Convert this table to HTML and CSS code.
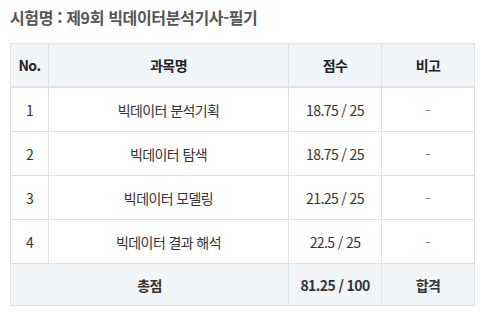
FILE: index.html
```html
<!DOCTYPE html>
<html lang="ko">
    <head>
        <meta charset="UTF-8">
        <title>시험 결과</title>
        <link rel="stylesheet" href="styles.css">
    </head>
    <body>
        <div class="result">
            <h2 class="exam-title">시험명 : 제9회 빅데이터분석기사-필기</h2>
            <table class="score-table">
                <colgroup>
                    <col class="col-no">
                    <col class="col-name">
                    <col class="col-score">
                    <col class="col-note">
                </colgroup>
                <thead>
                    <tr>
                        <th>No.</th>
                        <th>과목명</th>
                        <th>점수</th>
                        <th>비고</th>
                    </tr>
                </thead>
                <tbody>
                    <tr>
                        <td>1</td>
                        <td>빅데이터 분석기획</td>
                        <td>18.75 / 25</td>
                        <td class="note">-</td>
                    </tr>
                    <tr>
                        <td>2</td>
                        <td>빅데이터 탐색</td>
                        <td>18.75 / 25</td>
                        <td class="note">-</td>
                    </tr>
                    <tr>
                        <td>3</td>
                        <td>빅데이터 모델링</td>
                        <td>21.25 / 25</td>
                        <td class="note">-</td>
                    </tr>
                    <tr>
                        <td>4</td>
                        <td>빅데이터 결과 해석</td>
                        <td>22.5 / 25</td>
                        <td class="note">-</td>
                    </tr>
                </tbody>
                <tfoot>
                    <tr>
                        <th colspan="2">총점</th>
                        <th>81.25 / 100</th>
                        <th>합격</th>
                    </tr>
                </tfoot>
            </table>
        </div>
    </body>
</html>
```

FILE: styles.css
```css
body {
    margin: 0;
    padding: 0 10px;
    background: #fff;
    font-family: "Noto Sans CJK KR", "Noto Sans", sans-serif;
    color: #333;
}

.exam-title {
    margin: 0;
    padding-top: 6px;
    height: 37px;
    font-size: 16px;
    font-weight: 700;
    line-height: 22px;
    color: #555;
    letter-spacing: -0.35px;
}

.score-table {
    width: 464px;
    border-collapse: collapse;
    table-layout: fixed;
    font-size: 14px;
    letter-spacing: -0.6px;
}

.col-no { width: 38px; }
.col-name { width: 240px; }
.col-score { width: 93px; }
.col-note { width: 93px; }

.score-table th,
.score-table td {
    border: 1px solid #dde1e6;
    text-align: center;
    padding: 0;
}

.score-table thead th {
    height: 42px;
    background: #f2f5f7;
    color: #222;
    font-weight: 700;
    border-bottom: 2px solid #dde1e6;
}

.score-table td {
    height: 43px;
    color: #333;
}

.score-table td.note {
    color: #777;
}

.score-table tfoot th {
    height: 41px;
    background: #f2f5f7;
    color: #333;
    font-weight: 700;
}
```
